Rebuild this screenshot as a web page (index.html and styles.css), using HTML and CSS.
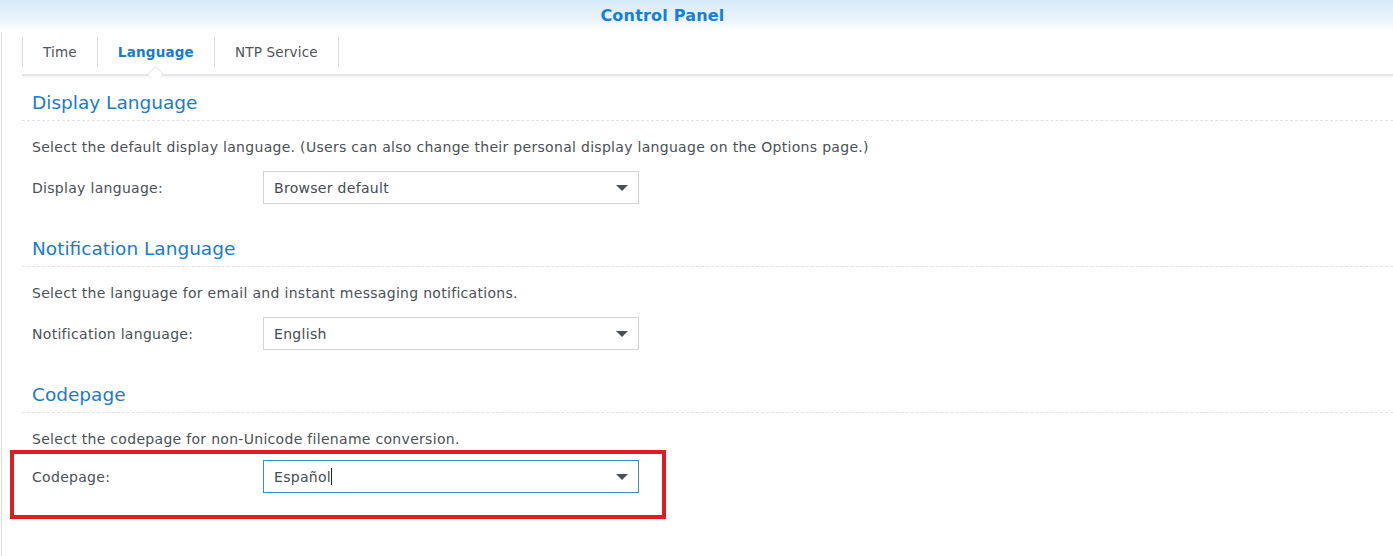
FILE: index.html
```html
<!DOCTYPE html>
<html>
<head>
<meta charset="utf-8">
<link rel="stylesheet" href="styles.css">
</head>
<body>
<div class="header"><span class="title">Control Panel</span></div>
<div class="main">
  <div class="tabs">
    <div class="tab">Time</div>
    <div class="tab active">Language<span class="notch"></span></div>
    <div class="tab">NTP Service</div>
  </div>
  <div class="section first">
    <div class="sec-title">Display Language</div>
    <div class="desc">Select the default display language. (Users can also change their personal display language on the Options page.)</div>
    <div class="row">
      <div class="label">Display language:</div>
      <div class="select"><span>Browser default</span><span class="arrow"></span></div>
    </div>
  </div>
  <div class="section">
    <div class="sec-title">Notification Language</div>
    <div class="desc">Select the language for email and instant messaging notifications.</div>
    <div class="row">
      <div class="label">Notification language:</div>
      <div class="select"><span>English</span><span class="arrow"></span></div>
    </div>
  </div>
  <div class="section">
    <div class="sec-title">Codepage</div>
    <div class="desc">Select the codepage for non-Unicode filename conversion.</div>
    <div class="highlight">
      <div class="row">
        <div class="label">Codepage:</div>
        <div class="select focused"><span>Español<span class="caret"></span></span><span class="arrow"></span></div>
      </div>
    </div>
  </div>
</div>
</body>
</html>
```
FILE: styles.css
```css
html, body {
  margin: 0;
  padding: 0;
}
body {
  width: 1393px;
  height: 556px;
  overflow: hidden;
  background: #fff;
  font-family: "DejaVu Sans", Verdana, sans-serif;
  font-size: 14px;
  letter-spacing: 0.3px;
  color: #4a5157;
}
.header {
  height: 32px;
  background: linear-gradient(to bottom, #d6e9f9 0%, #eaf4fc 60%, #ffffff 100%);
  display: flex;
  align-items: center;
  justify-content: center;
}
.title {
  font-weight: bold;
  font-size: 16px;
  letter-spacing: 0.2px;
  color: #1580d8;
  margin-right: 68px;
  margin-top: -2px;
}
.main {
  margin-left: 1px;
  border-left: 1px solid #dcdcdc;
  padding-left: 20px;
  height: 524px;
}
.tabs {
  display: flex;
  height: 44px;
  border-bottom: 2px solid #e3e5e7;
  box-shadow: 0 2px 3px rgba(0,0,0,0.04);
  box-sizing: border-box;
  padding-top: 5px;
  align-items: flex-start;
}
.tab {
  position: relative;
  height: 30px;
  line-height: 30px;
  padding: 0 20px;
  border-right: 1px solid #d8dcdf;
  color: #4d545a;
  font-size: 13.5px;
  letter-spacing: 0.2px;
}
.tab:first-child {
  border-left: 1px solid #d8dcdf;
}
.tab.active {
  font-weight: bold;
  color: #1a7bcc;
}
.notch {
  position: absolute;
  left: 50%;
  bottom: -12px;
  width: 10px;
  height: 10px;
  margin-left: -6px;
  background: #fff;
  border-left: 1px solid #e3e5e7;
  border-top: 1px solid #e3e5e7;
  transform: rotate(45deg);
}
.section {
  padding-top: 32px;
}
.section.first {
  padding-top: 14px;
}
.sec-title {
  font-size: 18.5px;
  letter-spacing: 0;
  color: #1a7bcc;
  padding-left: 10px;
  height: 30px;
  line-height: 26px;
  border-bottom: 1px dashed #dfe2e4;
}
.desc {
  padding-left: 10px;
  margin-top: 17px;
  line-height: 19px;
}
.row {
  display: flex;
  align-items: center;
  padding-left: 10px;
  margin-top: 14px;
  height: 33px;
}
.label {
  width: 231px;
}
.select {
  height: 31px;
  border: 1px solid #cfd4d8;
  display: flex;
  align-items: center;
  justify-content: space-between;
  padding: 0 10px;
  width: 354px;
  color: #454c52;
}
.select.focused {
  border-color: #3b8ec5;
}
.arrow {
  width: 0;
  height: 0;
  border-left: 6px solid transparent;
  border-right: 6px solid transparent;
  border-top: 6px solid #4a4f55;
}
.caret {
  display: inline-block;
  width: 1px;
  height: 17px;
  background: #222;
  vertical-align: -3px;
}
.highlight {
  margin-left: -12px;
  margin-top: 1px;
  width: 640px;
  border: 4px solid #e21b22;
  padding: 6px 0 22px 8px;
}
.highlight .row {
  margin-top: 0;
}
```
